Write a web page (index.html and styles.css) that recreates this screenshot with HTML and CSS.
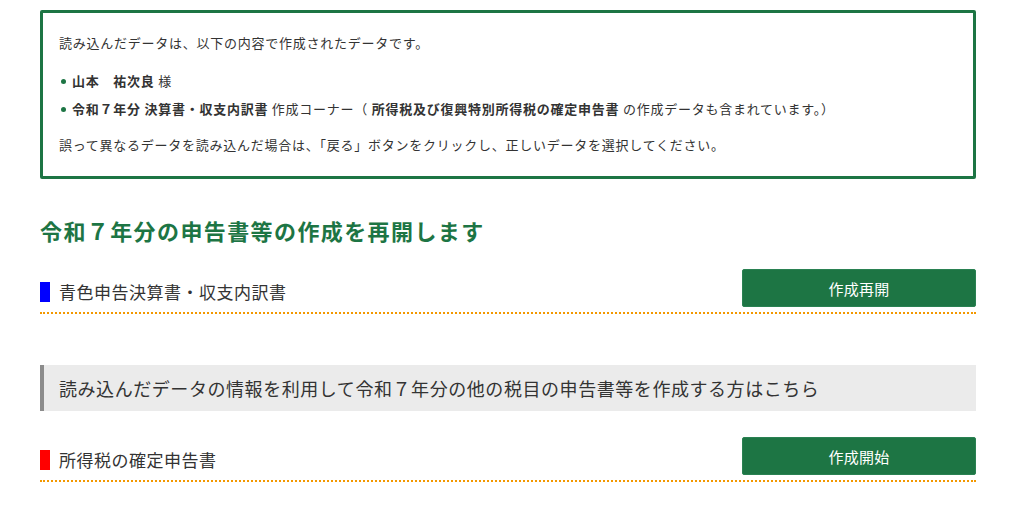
FILE: index.html
```html
<!DOCTYPE html>
<html lang="ja">
<head>
<meta charset="utf-8">
<title>作成再開</title>
<link rel="stylesheet" href="styles.css">
</head>
<body>
<div class="page">
  <div class="notice">
    <p class="lead">読み込んだデータは、以下の内容で作成されたデータです。</p>
    <ul class="facts">
      <li><strong>山本　祐次良</strong> 様</li>
      <li><strong>令和７年分 決算書・収支内訳書</strong> 作成コーナー（ <strong>所得税及び復興特別所得税の確定申告書</strong> の作成データも含まれています。）</li>
    </ul>
    <p class="note">誤って異なるデータを読み込んだ場合は、「戻る」ボタンをクリックし、正しいデータを選択してください。</p>
  </div>

  <h1 class="title">令和７年分の申告書等の作成を再開します</h1>

  <div class="row">
    <div class="label"><span class="mark mark-blue"></span>青色申告決算書・収支内訳書</div>
    <button class="btn">作成再開</button>
  </div>

  <div class="subhead">読み込んだデータの情報を利用して令和７年分の他の税目の申告書等を作成する方はこちら</div>

  <div class="row">
    <div class="label"><span class="mark mark-red"></span>所得税の確定申告書</div>
    <button class="btn">作成開始</button>
  </div>
</div>
</body>
</html>
```

FILE: styles.css
```css
* { box-sizing: border-box; }
body {
  margin: 0;
  background: #fff;
  color: #333;
  font-family: "Noto Sans CJK JP", "Noto Sans", sans-serif;
}
.page {
  width: 936px;
  margin-left: 40px;
  padding-top: 10px;
}
.notice {
  border: 3px solid #1d7544;
  border-radius: 2px;
  padding: 20px 16px 21px 16px;
  font-size: 13px;
  line-height: 20px;
  letter-spacing: 0.75px;
}
.notice p { margin: 0; }
.lead { margin-bottom: 18px !important; }
.facts {
  list-style: none;
  margin: 0 0 16px 0;
  padding: 0;
}
.facts li {
  position: relative;
  padding-left: 13px;
  margin-bottom: 8px;
}
.facts li:last-child { margin-bottom: 0; }
.facts li::before {
  content: "";
  position: absolute;
  left: 2px;
  top: 8px;
  width: 5px;
  height: 5px;
  border-radius: 50%;
  background: #1d7544;
}
.facts strong { font-weight: 700; }
.title {
  margin: 36px 0 24px 0;
  font-size: 22px;
  line-height: 30px;
  font-weight: 700;
  letter-spacing: 1.4px;
  color: #1d7544;
}
.row {
  display: flex;
  justify-content: space-between;
  align-items: flex-end;
  border-bottom: 2px dotted #f39800;
  padding-bottom: 5px;
}
.label {
  display: flex;
  align-items: center;
  font-size: 17px;
  line-height: 22px;
  letter-spacing: 0.5px;
  color: #333;
  padding-bottom: 4px;
}
.mark {
  display: inline-block;
  width: 10px;
  height: 20px;
  margin-right: 9px;
}
.mark-blue { background: #0000ff; }
.mark-red { background: #ff0000; }
.btn {
  width: 234px;
  height: 38px;
  background: #1d7544;
  color: #fff;
  border: 1px solid #2a8152;
  border-radius: 2px;
  font-family: inherit;
  font-size: 15px;
  letter-spacing: 0.3px;
  cursor: pointer;
}
.subhead {
  margin: 51px 0 26px 0;
  background: #ebebeb;
  border-left: 4px solid #8c8c8c;
  padding: 0 15px;
  height: 46px;
  display: flex;
  align-items: center;
  font-size: 18px;
  letter-spacing: 0.56px;
  color: #333;
}
```
